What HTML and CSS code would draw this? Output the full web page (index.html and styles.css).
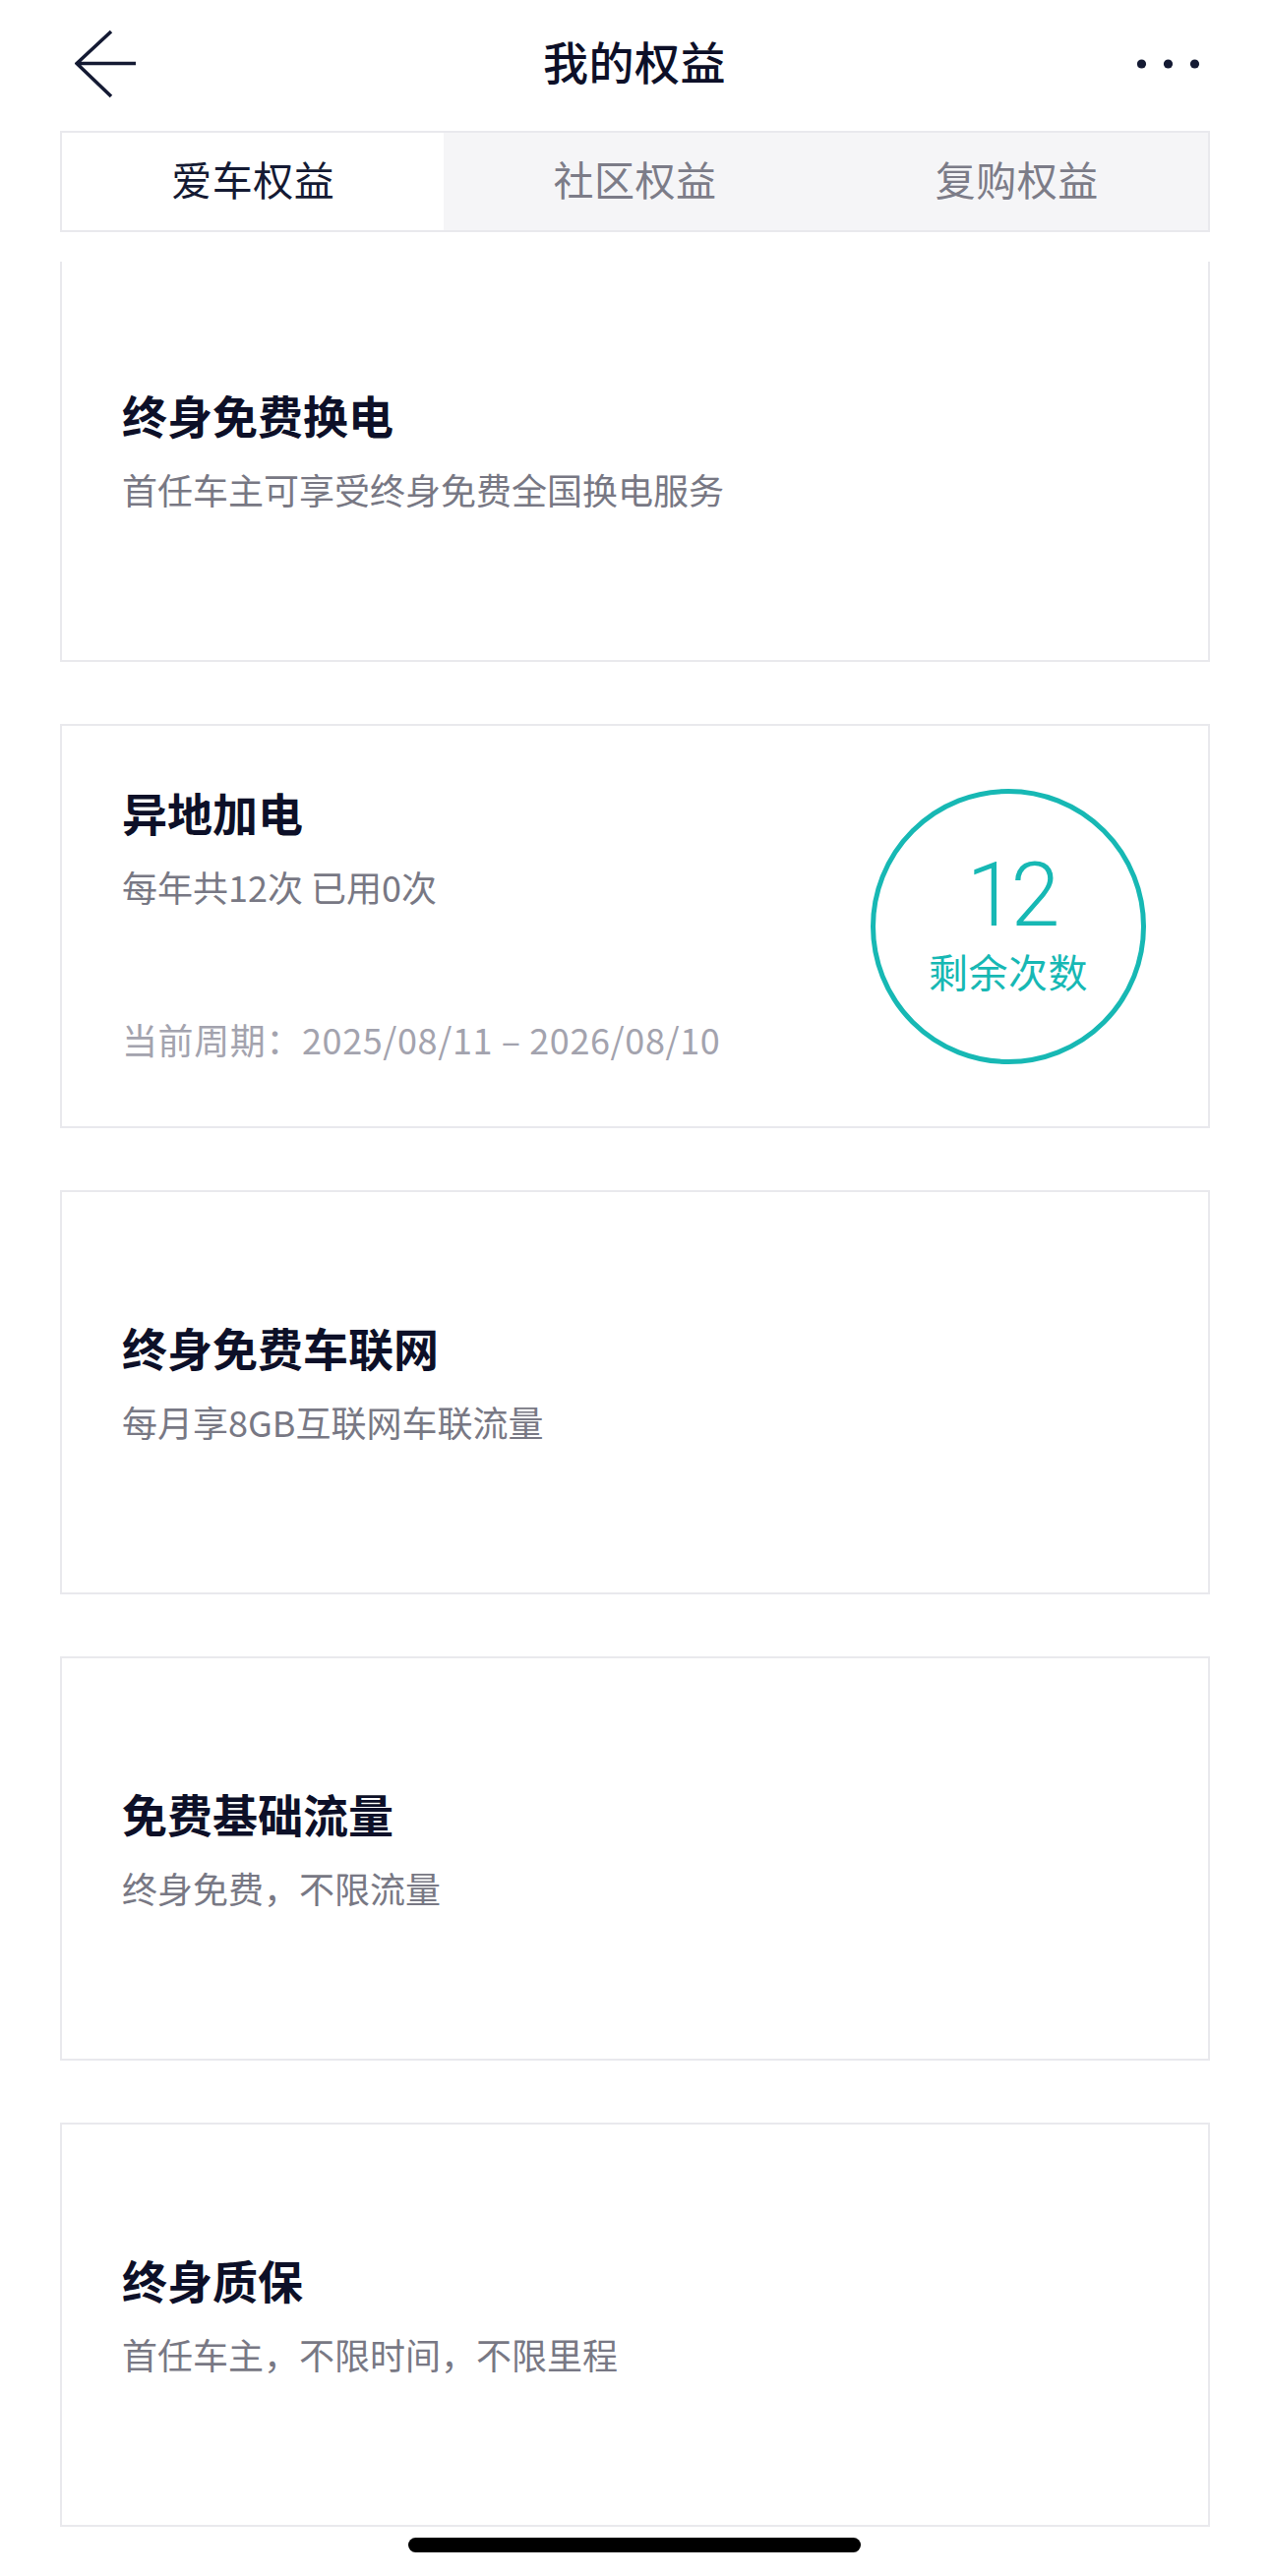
FILE: index.html
```html
<!DOCTYPE html>
<html lang="zh-CN">
<head>
<meta charset="utf-8">
<title>我的权益</title>
<link rel="stylesheet" href="styles.css">
</head>
<body>
<div class="screen">
  <header class="navbar">
    <div class="nav-left">
      <svg class="back-icon" width="64" height="72" viewBox="0 0 64 72" aria-hidden="true">
        <path d="M37 3 L2 35.5 L37 69 M2 35.5 L62 35.5" fill="none" stroke="#141a33" stroke-width="3.6" stroke-linejoin="miter" stroke-linecap="butt"/>
      </svg>
    </div>
    <h1 class="nav-title">我的权益</h1>
    <div class="nav-right">
      <svg class="more-icon" width="64" height="12" viewBox="0 0 64 12" aria-hidden="true">
        <circle cx="4.5" cy="6" r="4.6" fill="#141a33"/>
        <circle cx="31.5" cy="6" r="4.6" fill="#141a33"/>
        <circle cx="58.5" cy="6" r="4.6" fill="#141a33"/>
      </svg>
    </div>
  </header>

  <nav class="tabs">
    <div class="tab tab-active">爱车权益</div>
    <div class="tab">社区权益</div>
    <div class="tab">复购权益</div>
  </nav>

  <main class="content">
    <div class="list">
      <section class="card">
        <h2 class="card-title">终身免费换电</h2>
        <p class="card-desc">首任车主可享受终身免费全国换电服务</p>
      </section>

      <section class="card card-quota">
        <div class="quota-text">
          <h2 class="card-title">异地加电</h2>
          <p class="card-desc">每年共12次 已用0次</p>
          <p class="card-period">当前周期：2025/08/11 – 2026/08/10</p>
        </div>
        <div class="quota-ring">
          <span class="ring-num">12</span>
          <span class="ring-label">剩余次数</span>
        </div>
      </section>

      <section class="card">
        <h2 class="card-title">终身免费车联网</h2>
        <p class="card-desc">每月享8GB互联网车联流量</p>
      </section>

      <section class="card">
        <h2 class="card-title">免费基础流量</h2>
        <p class="card-desc">终身免费，不限流量</p>
      </section>

      <section class="card">
        <h2 class="card-title">终身质保</h2>
        <p class="card-desc">首任车主，不限时间，不限里程</p>
      </section>
    </div>
  </main>

  <div class="home-indicator"></div>
</div>
</body>
</html>
```

FILE: styles.css
```css
* {
  box-sizing: border-box;
}

html, body {
  margin: 0;
  padding: 0;
  background: #ffffff;
}

body {
  font-family: "Noto Sans CJK SC", "Noto Sans", "Liberation Sans", sans-serif;
  color: #0d1028;
}

.screen {
  position: relative;
  width: 1290px;
  height: 2619px;
  overflow: hidden;
  background: #ffffff;
}

/* Navigation bar */
.navbar {
  height: 130px;
  display: grid;
  grid-template-columns: 1fr auto 1fr;
  align-items: center;
}

.nav-left {
  justify-self: start;
  padding-left: 76px;
  display: flex;
  align-items: center;
}

.back-icon {
  display: block;
}

.nav-title {
  margin: 0 0 9px 0;
  font-size: 46px;
  font-weight: 500;
  line-height: 60px;
  color: #0d1028;
  letter-spacing: 0.5px;
}

.nav-right {
  justify-self: end;
  padding-right: 70px;
  display: flex;
  align-items: center;
}

.more-icon {
  display: block;
}

/* Tabs */
.tabs {
  margin: 3px 60px 0 61px;
  height: 103px;
  border: 2px solid #e9e9ed;
  display: grid;
  grid-template-columns: 1fr 1fr 1fr;
  background: #f5f5f7;
}

.tab {
  display: flex;
  align-items: center;
  justify-content: center;
  padding-bottom: 7px;
  font-size: 41px;
  color: #7c7c88;
  letter-spacing: 0.5px;
}

.tab-active {
  background: #ffffff;
  color: #141a33;
}

/* Content */
.content {
  margin-top: 30px;
  height: 2353px;
  overflow: hidden;
}

.list {
  margin: -4px 60px 0 61px;
  display: flex;
  flex-direction: column;
  gap: 63px;
}

.card {
  height: 411px;
  border: 2px solid #e9e9ed;
  background: #ffffff;
  padding: 0 61px 24px 61px;
  display: flex;
  flex-direction: column;
  justify-content: center;
}

.card-title {
  margin: 0;
  font-size: 46px;
  line-height: 56px;
  font-weight: 700;
  color: #0d1028;
}

.card-desc {
  margin: 26px 0 0 0;
  font-size: 36px;
  line-height: 44px;
  color: #787884;
}

.card-period {
  margin: 111px 0 0 0;
  font-size: 36px;
  line-height: 44px;
  color: #a3a3ae;
  letter-spacing: 0.6px;
}

/* Quota card */
.card-quota {
  flex-direction: row;
  align-items: center;
  justify-content: space-between;
  padding: 59px 63px 68px 61px;
}

.quota-text {
  display: flex;
  flex-direction: column;
  align-self: flex-start;
}

.quota-ring {
  width: 280px;
  height: 280px;
  flex: none;
  align-self: center;
  margin-top: 9px;
  border: 5px solid #17b8b4;
  border-radius: 50%;
  display: flex;
  flex-direction: column;
  align-items: center;
  justify-content: center;
  padding-bottom: 9px;
  color: #17b8b4;
}

.ring-num {
  font-family: "Roboto", "Liberation Sans", sans-serif;
  font-weight: 300;
  font-size: 90px;
  line-height: 104px;
  letter-spacing: -5px;
  margin-right: -5px;
  margin-top: -8px;
}

.ring-label {
  margin-top: -5px;
  font-size: 40px;
  line-height: 58px;
  letter-spacing: 0.5px;
  margin-bottom: -8px;
}

/* Home indicator overlay */
.home-indicator {
  position: absolute;
  left: 415px;
  top: 2580px;
  width: 460px;
  height: 15px;
  border-radius: 8px;
  background: #000000;
}
```
